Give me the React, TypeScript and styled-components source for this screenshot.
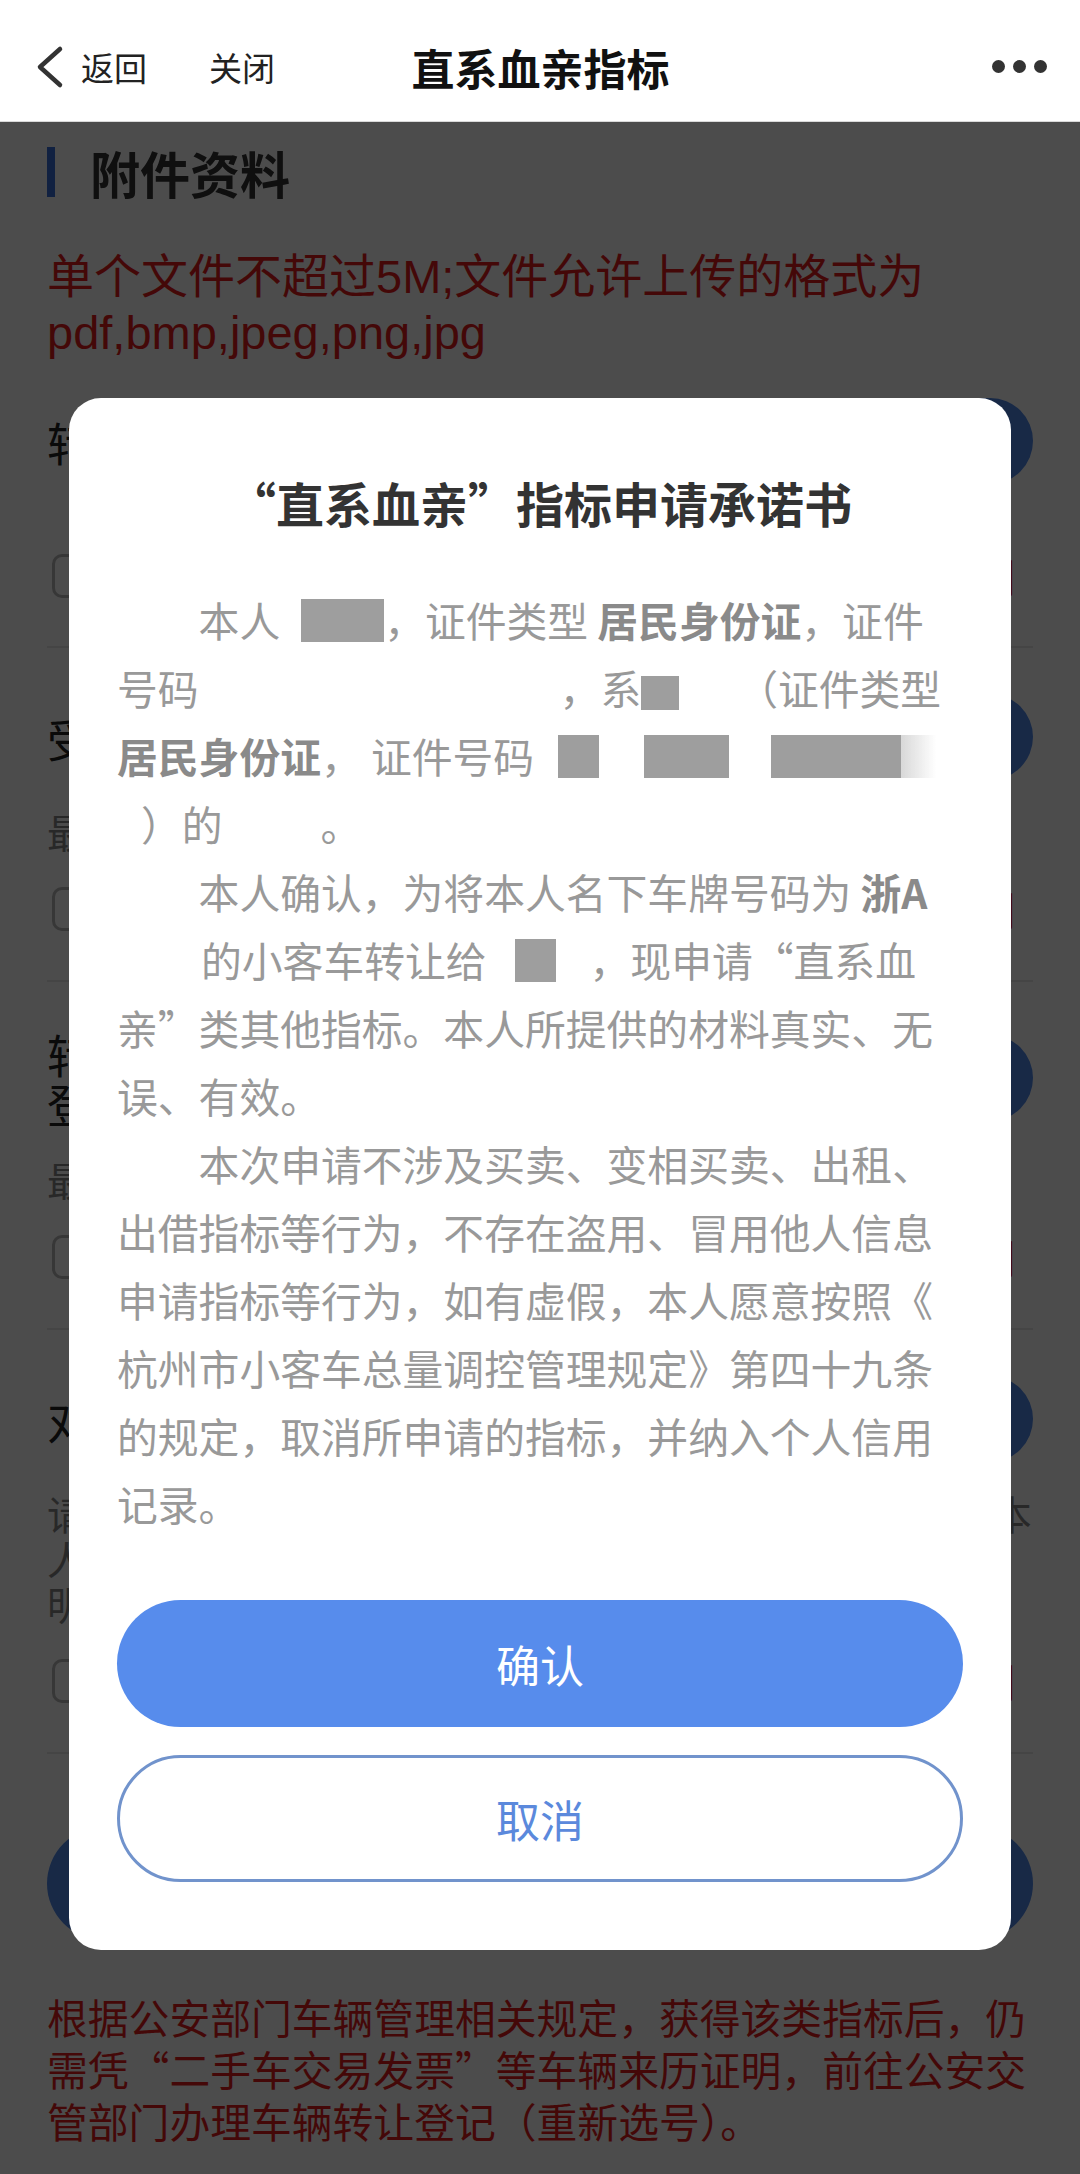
import React from "react";
import styled, { createGlobalStyle } from "styled-components";

const GlobalStyle = createGlobalStyle`
  html, body {
    margin: 0;
    padding: 0;
    background: #ffffff;
  }
  body {
    font-family: "Noto Sans CJK SC", "Noto Sans", sans-serif;
    -webkit-font-smoothing: antialiased;
  }
  * {
    box-sizing: border-box;
  }
`;

const Shell = styled.div`
  width: 1080px;
  min-height: 2174px;
  background: #ffffff;
`;

/* ---------- native nav bar ---------- */

const NavBar = styled.header`
  height: 122px;
  display: grid;
  grid-template-columns: 1fr auto 1fr;
  align-items: center;
  padding: 12px 33px 0 34px;
  background: #ffffff;
  border-bottom: 1px solid #d9d9d9;
`;

const NavLeft = styled.div`
  display: flex;
  align-items: center;
`;

const NavLink = styled.span<{ $gap?: number }>`
  font-size: 33px;
  line-height: 44px;
  color: #222222;
  margin-left: ${(p) => p.$gap ?? 0}px;
`;

const NavTitle = styled.h1`
  margin: 0;
  font-size: 43px;
  line-height: 56px;
  font-weight: 700;
  color: #111111;
`;

const MoreDots = styled.div`
  justify-self: end;
  display: flex;
  gap: 8px;
`;

const Dot = styled.span`
  width: 13px;
  height: 13px;
  border-radius: 50%;
  background: #333333;
`;

/* ---------- page under the dialog ---------- */

const Page = styled.main`
  padding: 25px 47px 0;
`;

const SectionTitle = styled.h2`
  margin: 0;
  height: 50px;
  line-height: 50px;
  font-size: 50px;
  font-weight: 700;
  color: #333333;
  border-left: 8px solid #3b6fd9;
  padding-left: 35px;
`;

const Notice = styled.p<{ $size: number; $lh: number; $top: number; $latin?: boolean }>`
  margin: ${(p) => p.$top}px 0 0;
  font-family: ${(p) =>
    p.$latin
      ? `"Liberation Sans", "Noto Sans CJK SC", sans-serif`
      : `"Noto Sans CJK SC", "Noto Sans", sans-serif`};
  font-size: ${(p) => p.$size}px;
  line-height: ${(p) => p.$lh}px;
  color: #e51c1c;
`;

const Row = styled.section`
  padding: 46px 0 49px;
  border-bottom: 2px solid #e6e6e6;
  &:first-child {
    padding-top: 37px;
    padding-bottom: 48px;
  }
`;

const RowHead = styled.div`
  display: flex;
  align-items: center;
  gap: 30px;
  min-height: 86px;
`;

const Label = styled.div`
  flex: 1;
  font-size: 46px;
  line-height: 50px;
  color: #222222;
`;

const UploadButton = styled.button`
  flex: none;
  width: 236px;
  height: 86px;
  border: none;
  border-radius: 43px;
  background: #5089ec;
  color: #ffffff;
  font-family: inherit;
  font-size: 42px;
`;

const Hint = styled.div`
  margin-top: 28px;
  font-size: 39.4px;
  line-height: 45px;
  color: #888888;
  white-space: pre-line;
`;

const CheckLine = styled.div<{ $spaced?: boolean }>`
  display: flex;
  align-items: center;
  height: 44px;
  margin-top: ${(p) => (p.$spaced ? 70 : 34)}px;
`;

const CheckBox = styled.span`
  flex: none;
  width: 44px;
  height: 44px;
  margin-left: 5px;
  border: 3px solid #b8b8b8;
  border-radius: 10px;
`;

const CheckText = styled.span`
  flex: 1;
  margin-left: 16px;
  font-size: 39px;
  color: #888888;
`;

const SampleLink = styled.span`
  margin-right: 18px;
  font-size: 39px;
  color: #e51c1c;
`;

const SubmitButton = styled.button`
  display: block;
  width: 100%;
  height: 113px;
  margin-top: 73px;
  border: none;
  border-radius: 57px;
  background: #5089ec;
  color: #ffffff;
  font-family: inherit;
  font-size: 46px;
`;

/* ---------- dialog ---------- */

const Overlay = styled.div`
  position: fixed;
  top: 122px;
  left: 0;
  right: 0;
  bottom: 0;
  display: flex;
  justify-content: center;
  align-items: flex-start;
  padding-top: 276px;
  background: rgba(0, 0, 0, 0.7);
`;

const Dialog = styled.div`
  width: 942px;
  padding: 69px 48px 68px;
  background: #ffffff;
  border-radius: 32px;
`;

const DialogTitle = styled.h3`
  margin: 0;
  text-align: center;
  font-size: 48px;
  line-height: 70px;
  font-weight: 600;
  color: #333333;
`;

const DialogBody = styled.div`
  margin-top: 49px;
  padding-right: 10px;
  font-size: 40.8px;
  line-height: 68px;
  color: #999999;
  line-break: anywhere;
  word-break: break-all;
`;

const Para = styled.p`
  margin: 0;
  text-indent: 2em;
`;

const Strong = styled.b`
  font-weight: 700;
  color: #8a8a8a;
`;

const Mask = styled.span<{ $w: number; $h?: number; $ml?: number; $mr?: number; $fade?: boolean }>`
  display: inline-block;
  width: ${(p) => p.$w}px;
  height: ${(p) => p.$h ?? 43}px;
  margin-left: ${(p) => p.$ml ?? 0}px;
  margin-right: ${(p) => p.$mr ?? 0}px;
  vertical-align: -5px;
  text-indent: 0;
  background: ${(p) =>
    p.$fade ? "linear-gradient(to right, #d8d8d8, rgba(255,255,255,0))" : "#9e9e9e"};
  filter: blur(0.6px);
`;

const Blank = styled.span<{ $w: number }>`
  display: inline-block;
  width: ${(p) => p.$w}px;
  height: 1px;
  text-indent: 0;
`;

const DialogButton = styled.button<{ $primary?: boolean }>`
  display: block;
  width: 100%;
  height: 127px;
  margin-top: ${(p) => (p.$primary ? 62 : 28)}px;
  border-radius: 64px;
  border: ${(p) => (p.$primary ? "none" : "3px solid #7193cc")};
  background: ${(p) => (p.$primary ? "#578cec" : "#ffffff")};
  color: ${(p) => (p.$primary ? "#ffffff" : "#5b89dc")};
  font-family: inherit;
  font-size: 44px;
`;

const BackIcon = () => (
  <svg width="30" height="44" viewBox="0 0 30 44">
    <polyline
      points="26,4 6,22 26,40"
      fill="none"
      stroke="#333"
      strokeWidth="4.5"
      strokeLinecap="round"
      strokeLinejoin="round"
    />
  </svg>
);

const rows = [
  { label: "转让人身份证明材料" },
  { label: "受让人身份证明材料", hint: "最多上传5个文件，单个文件不超过5M" },
  {
    label: "转让车辆的机动车行驶证和机动车登记证书",
    hint: "最多上传5个文件，单个文件不超过5M",
  },
  {
    label: "对应直系血亲关系证明材料",
    hint: "请上传可以证明转让人与受让人为直系血亲关系的户口本\n人信息页、结婚证或出生医学证明等关系证\n明材料。",
  },
];

const App = () => {
  return (
    <Shell lang="zh-CN">
      <GlobalStyle />
      <NavBar>
        <NavLeft>
          <BackIcon />
          <NavLink $gap={17}>返回</NavLink>
          <NavLink $gap={62}>关闭</NavLink>
        </NavLeft>
        <NavTitle>直系血亲指标</NavTitle>
        <MoreDots>
          <Dot />
          <Dot />
          <Dot />
        </MoreDots>
      </NavBar>

      <Page>
        <SectionTitle>附件资料</SectionTitle>
        <Notice $size={47} $lh={56} $top={52} $latin>
          单个文件不超过5M;文件允许上传的格式为pdf,bmp,jpeg,png,jpg
        </Notice>

        <div>
          {rows.map((row) => (
            <Row key={row.label}>
              <RowHead>
                <Label>{row.label}</Label>
                <UploadButton>上传</UploadButton>
              </RowHead>
              {row.hint && <Hint>{row.hint}</Hint>}
              <CheckLine $spaced={!row.hint}>
                <CheckBox />
                <CheckText>已确认上传材料真实有效</CheckText>
                <SampleLink>查看示例</SampleLink>
              </CheckLine>
            </Row>
          ))}
        </div>

        <SubmitButton>提交申请</SubmitButton>

        <Notice $size={40.8} $lh={52} $top={51}>
          根据公安部门车辆管理相关规定，获得该类指标后，仍需凭“二手车交易发票”等车辆来历证明，前往公安交
          <br />
          管部门办理车辆转让登记（重新选号）。
        </Notice>
      </Page>

      <Overlay>
        <Dialog>
          <DialogTitle>“直系血亲”指标申请承诺书</DialogTitle>
          <DialogBody>
            <Para>
              本人<Mask $w={83} $ml={21} />，证件类型{" "}
              <Strong>居民身份证</Strong>，证件号码<Blank $w={361} />
              ，系<Mask $w={38} $h={34} />
              <Blank $w={58} />
              （证件类型{" "}<Strong>居民身份证</Strong>，{" "}证件号码{" "}
              <Blank $w={15} />
              <Mask $w={41} />
              <Blank $w={45} />
              <Mask $w={85} />
              <Blank $w={42} />
              <Mask $w={130} />
              <Mask $w={35} $fade />
              <Blank $w={24} />
              ）的<Blank $w={98} />。
            </Para>
            <Para>
              本人确认，为将本人名下车牌号码为{" "}<Strong>浙A</Strong>
              <Blank $w={84} />
              的小客车转让给<Mask $w={41} $ml={28} $mr={34} />
              ，现申请“直系血亲”类其他指标。本人所提供的材料真实、无误、有效。
            </Para>
            <Para>
              本次申请不涉及买卖、变相买卖、出租、出借指标等行为，不存在盗用、冒用他人信息申请指标等行为，如有虚假，本人愿意按照《杭州市小客车总量调控管理规定》第四十九条的规定，取消所申请的指标，并纳入个人信用记录。
            </Para>
          </DialogBody>
          <DialogButton $primary>确认</DialogButton>
          <DialogButton>取消</DialogButton>
        </Dialog>
      </Overlay>
    </Shell>
  );
};

export default App;
